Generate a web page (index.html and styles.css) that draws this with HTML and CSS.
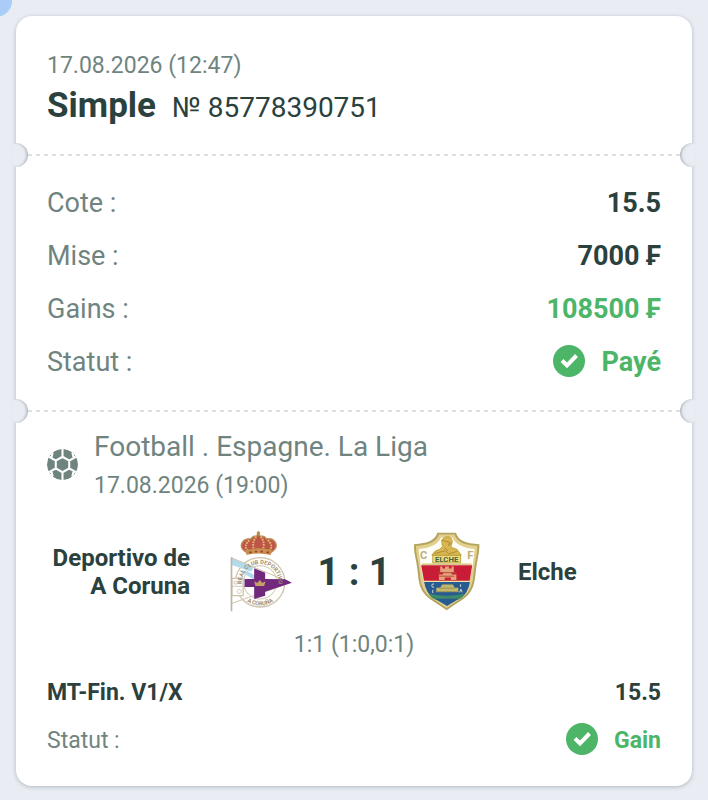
FILE: index.html
```html
<!DOCTYPE html>
<html lang="fr">
<head>
    <meta charset="UTF-8">
    <meta name="viewport" content="width=device-width, initial-scale=1.0">
    <title>Simple № 85778390751</title>
    <link rel="stylesheet" href="styles.css">
</head>
<body>
    <div class="bubble"></div>

    <main class="ticket">
        <!-- Ticket header -->
        <header class="ticket-header">
            <div class="date">17.08.2026 (12:47)</div>
            <div class="title-row">
                <h1 class="title">Simple</h1>
                <span class="number">№ 85778390751</span>
            </div>
        </header>

        <div class="separator"></div>

        <!-- Bet summary -->
        <dl class="summary">
            <div class="row">
                <dt>Cote :</dt>
                <dd>15.5</dd>
            </div>
            <div class="row">
                <dt>Mise :</dt>
                <dd>7000 ₣</dd>
            </div>
            <div class="row">
                <dt>Gains :</dt>
                <dd class="green">108500 ₣</dd>
            </div>
            <div class="row">
                <dt>Statut :</dt>
                <dd class="green status">
                    <svg class="check" viewBox="0 0 32 32" aria-hidden="true">
                        <circle cx="16" cy="16" r="16"/>
                        <path d="M9 15.500l5 5 9.500-10"/>
                    </svg>
                    Payé
                </dd>
            </div>
        </dl>

        <div class="separator"></div>

        <!-- Event -->
        <section class="event">
            <div class="event-head">
                <svg class="ball" viewBox="0 0 30 30" aria-hidden="true">
                    <circle cx="15" cy="15" r="15"/>
                    <path d="M15 7.500l6.500 3.700v7.600L15 22.500l-6.500-3.700v-7.600zM15 7.500V0M21.500 11.200L28 7.500M21.500 18.800l6.500 3.700M15 22.500V30M8.500 18.800L2 22.500M8.500 11.200L2 7.500M24.500 3.500L26 9.500M5.500 3.500L4 9.500M24.500 26.500L26 20.500M5.500 26.500L4 20.500"/>
                </svg>
                <div>
                    <h2 class="league">Football . Espagne. La Liga</h2>
                    <div class="date">17.08.2026 (19:00)</div>
                </div>
            </div>

            <div class="match">
                <div class="team home">Deportivo de A Coruna</div>
                <svg class="crest" viewBox="28 30 195 246" role="img" aria-label="Deportivo">
                    <defs>
                        <path id="dep-top" d="M69 194A55 55 0 1 1 177 194"/>
                        <path id="dep-bottom" d="M66 224A70 70 0 0 0 180 224"/>
                    </defs>
                    <circle cx="123" cy="184" r="74" fill="#fffefa" stroke="#cfc4ae" stroke-width="4"/>
                    <circle cx="123" cy="184" r="50" fill="#fff" stroke="#cfc4ae" stroke-width="3"/>
                    <path d="M38 112l65 26-6 14-59-20zM58 148l24 1 52 29-17 6z" fill="#b2daea"/>
                    <path d="M36 110L105 139 214 185 126 216 38 247" fill="none" stroke="#cfc4ae" stroke-width="3"/>
                    <path d="M76 174h29v-32l33 13v19l60 1 20 10-80 27v12l-33 10v-36H76z" fill="#71287d"/>
                    <path d="M38 172h34v52H38z" fill="#fff" stroke="#cfc4ae" stroke-width="4"/>
                    <path d="M39 196h32M45 181h9v8h-9zM60 205a6 6 0 1 0 .1 0" fill="none" stroke="#d4cbb9" stroke-width="3"/>
                    <path d="M37 109v162" stroke="#bcb4a5" stroke-width="5"/>
                    <path d="M105 181l9 5 8-9 8 9 9-5-4 14h-26z" fill="#c7a163"/>
                    <text class="crest-ring"><textPath href="#dep-top" startOffset="50%" text-anchor="middle">REAL CLUB DEPORTIVO</textPath></text>
                    <text class="crest-ring"><textPath href="#dep-bottom" startOffset="50%" text-anchor="middle">A CORUÑA</textPath></text>
                    <path d="M82 94Q60 81 69 65q8-14 26-11 5-9 18-9l4-11 5 11q16 0 20 9 19-4 27 11 8 16-13 29z" fill="#bd5649" stroke="#bd8d51" stroke-width="4"/>
                    <path d="M86 90q-15-17 7-34M105 90q-9-28 8-44M130 90q10-28-7-44M150 90q15-17-6-34" fill="none" stroke="#e1b66c" stroke-width="6" stroke-dasharray="5 3"/>
                    <path d="M79 88q40-12 79 0l-3 14q-37-9-73 0z" fill="#c7914e"/>
                    <path d="M90 94h8M107 92h7M124 92h7M142 94h8" stroke="#a73d37" stroke-width="5"/>
                    <path d="M118 31v13M113 36h10" stroke="#b68846" stroke-width="4"/>
                </svg>
                <div class="score">1 : 1</div>
                <svg class="crest" viewBox="26 33 204 246" role="img" aria-label="Elche">
                    <path d="M98 35h58q8 34 72 35 1 21-5 45-4 20-9 65-6 39-34 59-16 10-53 35-37-24-53-35-28-20-34-59-4-42-9-65-6-24-5-45 64-2 72-35z" fill="#b3a45f"/>
                    <path d="M103 40h48q10 33 71 35 0 20-5 41-5 23-9 64-6 36-31 54-17 11-50 33-33-22-50-33-25-18-31-54-4-41-9-64-5-21-5-41 61-2 71-35z" fill="#e3d08f"/>
                    <path d="M109 49h36q12 30 68 36-1 16-6 54l-9 44q-6 34-26 47l-45 27-45-27q-20-13-26-47l-9-44q-5-38-6-54 57-6 68-36z" fill="#fffef6"/>
                    <path d="M84 104h86v24H84z" fill="#eedb77" stroke="#b9a345" stroke-width="3"/>
                    <path d="M81 104q9-16 24-18l9-9-3-17q4-13 20-13 15 2 13 18l-4 14 19 7 13 18z" fill="#d9b650" stroke="#b0922f" stroke-width="2"/>
                    <path d="M112 58l24 6-3 11 10-10M90 99l33-9 10 10 27-8M120 80l11 11" fill="none" stroke="#a98c3c" stroke-width="3"/>
                    <text x="127" y="124" text-anchor="middle" class="crest-name">ELCHE</text>
                    <text x="56" y="117" text-anchor="middle" class="crest-letter">C</text>
                    <text x="200" y="117" text-anchor="middle" class="crest-letter">F</text>
                    <path d="M48 135h158l-8 49H57z" fill="#c91c36"/>
                    <path d="M50 132h154" stroke="#d7c87e" stroke-width="4"/>
                    <path d="M57 187h142q-6 35-29 50H86q-23-16-29-50z" fill="#285b91"/>
                    <path d="M72 223q54 13 111 0-7 14-23 19H95q-17-6-23-19z" fill="#3c8a67"/>
                    <path d="M90 239h75l-37 22z" fill="#285b91"/>
                    <path d="M56 185h142" stroke="#eee2a6" stroke-width="4"/>
                    <path d="M107 139h7v6h8v-6h12v6h8v-6h7v17h-7v8h15v17h-17v-8h-19v8h-18v-17h13v-8h-9z" fill="#e5a37c"/>
                    <path d="M100 158h58M104 169h47" stroke="#b94b37" stroke-width="3"/>
                    <path d="M95 218v-13h12l6-10h33l6 10h11v13z" fill="#c6b66d"/>
                    <path d="M94 217h70M105 206h48" stroke="#8f9353" stroke-width="3"/>
                    <path d="M88 193q-7-2-7 5t7 5M84 211v10M170 194v8M167 219l4-10 4 10" fill="none" stroke="#d9dac6" stroke-width="3"/>
                </svg>
                <div class="team">Elche</div>
            </div>
            <div class="periods">1:1 (1:0,0:1)</div>

            <div class="row bet">
                <span>MT-Fin. V1/X</span>
                <span>15.5</span>
            </div>
            <div class="row small">
                <span>Statut :</span>
                <span class="green status">
                    <svg class="check" viewBox="0 0 32 32" aria-hidden="true">
                        <circle cx="16" cy="16" r="16"/>
                        <path d="M9 15.500l5 5 9.500-10"/>
                    </svg>
                    Gain
                </span>
            </div>
        </section>
    </main>
</body>
</html>
```
FILE: styles.css
```css
* {
    margin: 0;
    padding: 0;
    box-sizing: border-box;
}

body {
    background-color: #e9edf3;
    color: #2b413d;
    font-family: Roboto, "Liberation Sans", sans-serif;
    padding: 16px;
    position: relative;
    overflow-x: hidden;
}

/* floating button peeking in from the corner */
.bubble {
    position: absolute;
    top: -15px;
    left: -20px;
    width: 32px;
    height: 32px;
    border-radius: 50%;
    background-color: #a9cdf8;
}

.ticket {
    background-color: #fff;
    border-radius: 16px;
    box-shadow: 0 1px 4px rgba(50, 60, 75, 0.3);
    padding-bottom: 21px;
}

/* header */
.ticket-header {
    padding: 32px 31px 13px;
}

.date {
    color: #70847f;
    font-size: 23px;
    line-height: 35px;
}

.title-row {
    display: flex;
    align-items: baseline;
    gap: 16px;
    line-height: 45px;
}

.title {
    font-size: 35px;
    font-weight: bold;
}

.number {
    font-size: 28px;
}

/* dashed line with a notch cut out of each side */
.separator {
    position: relative;
    height: 24px;
    margin: 0 -3px;
    background: repeating-linear-gradient(to right, #dcdfe0 0 4px, transparent 4px 8px) center / calc(100% - 30px) 2px no-repeat;
}

.separator::before,
.separator::after {
    content: "";
    position: absolute;
    top: 0;
    width: 15px;
    height: 24px;
    background-color: #e9edf3;
}

.separator::before {
    left: 0;
    border-radius: 0 12px 12px 0;
    box-shadow: inset -2px 0 3px -1px rgba(50, 60, 75, 0.4);
}

.separator::after {
    right: 0;
    border-radius: 12px 0 0 12px;
    box-shadow: inset 2px 0 3px -1px rgba(50, 60, 75, 0.4);
}

/* rows */
.summary {
    padding: 10px 31px;
}

.row {
    display: flex;
    justify-content: space-between;
    align-items: center;
    font-size: 27px;
    line-height: 53px;
    color: #70847f;
}

.row dd {
    font-weight: bold;
    color: #2b413d;
}

.row .green {
    color: #4cb568;
    font-weight: bold;
}

.status {
    display: flex;
    align-items: center;
    gap: 16px;
}

.check {
    width: 32px;
    height: 32px;
    margin-bottom: 4px;
}

.check circle {
    fill: #4cb568;
}

.check path {
    fill: none;
    stroke: #fff;
    stroke-width: 4;
}

/* event */
.event {
    padding: 3px 31px 0;
}

.event-head {
    display: flex;
    align-items: center;
    gap: 16px;
}

.league {
    color: #70847f;
    font-size: 28px;
    font-weight: normal;
    line-height: 42px;
}

.ball {
    width: 31px;
    height: 31px;
    border-radius: 50%;
}

.ball circle {
    fill: #70847f;
}

.ball path {
    fill: none;
    stroke: #fff;
    stroke-width: 2;
}

.match {
    display: flex;
    align-items: center;
    margin-top: 28px;
}

.team {
    flex: 1;
    padding-left: 38px;
    font-size: 24px;
    font-weight: bold;
    line-height: 28px;
}

.team.home {
    padding: 0 38px 0 0;
    text-align: right;
}

.crest {
    width: 66px;
    height: 82px;
}

.crest-ring {
    font: bold 17px Roboto, sans-serif;
    fill: #a08e70;
}

.crest-name {
    font: bold 24px Roboto, sans-serif;
    fill: #466345;
}

.crest-letter {
    font: bold 34px Roboto, sans-serif;
    fill: #b9ad7b;
}

.score {
    width: 120px;
    text-align: center;
    font-size: 38px;
    font-weight: bold;
    line-height: 44px;
}

.periods {
    margin-top: 15px;
    color: #70847f;
    font-size: 23px;
    line-height: 34px;
    text-align: center;
}

.row.bet,
.row.small {
    font-size: 23px;
    line-height: 48px;
}

.row.bet {
    margin-top: 7px;
    color: #2b413d;
    font-weight: bold;
}
```
